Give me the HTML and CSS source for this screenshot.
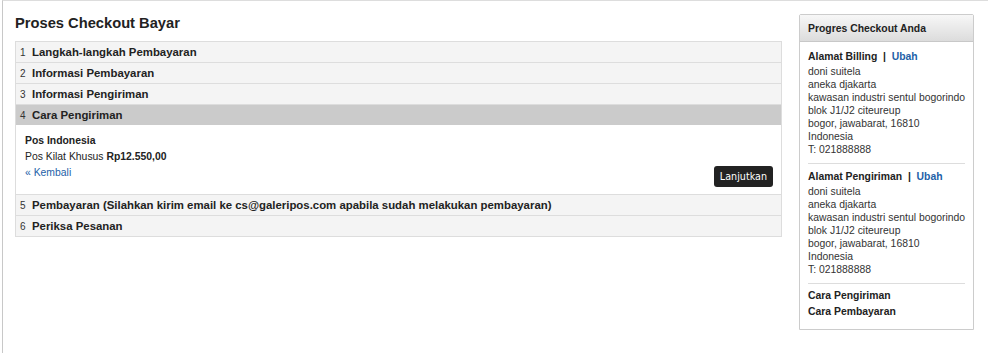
FILE: index.html
```html
<!DOCTYPE html>
<html lang="id">
<head>
    <meta charset="UTF-8">
    <meta name="viewport" content="width=device-width, initial-scale=1.0">
    <title>Proses Checkout Bayar</title>
    <link rel="stylesheet" href="styles.css">
</head>
<body>
    <div class="page">
        <div class="main">
            <h1>Proses Checkout Bayar</h1>
            <ol class="steps">
                <li class="step">
                    <div class="step-title"><span class="num">1</span>Langkah-langkah Pembayaran</div>
                </li>
                <li class="step">
                    <div class="step-title"><span class="num">2</span>Informasi Pembayaran</div>
                </li>
                <li class="step">
                    <div class="step-title"><span class="num">3</span>Informasi Pengiriman</div>
                </li>
                <li class="step active">
                    <div class="step-title"><span class="num">4</span>Cara Pengiriman</div>
                    <div class="step-body">
                        <div class="carrier">Pos Indonesia</div>
                        <div>Pos Kilat Khusus <b>Rp12.550,00</b></div>
                        <div class="step-actions">
                            <a href="#" class="back">« Kembali</a>
                            <button class="btn-next">Lanjutkan</button>
                        </div>
                    </div>
                </li>
                <li class="step">
                    <div class="step-title"><span class="num">5</span>Pembayaran (Silahkan kirim email ke cs@galeripos.com apabila sudah melakukan pembayaran)</div>
                </li>
                <li class="step">
                    <div class="step-title"><span class="num">6</span>Periksa Pesanan</div>
                </li>
            </ol>
        </div>

        <div class="sidebar">
            <div class="sidebar-head">Progres Checkout Anda</div>
            <div class="sidebar-body">
                <div class="block">
                    <div class="block-title">Alamat Billing &nbsp;|&nbsp; <a href="#">Ubah</a></div>
                    <address>
                        doni suitela<br>
                        aneka djakarta<br>
                        kawasan industri sentul bogorindo<br>
                        blok J1/J2 citeureup<br>
                        bogor, jawabarat, 16810<br>
                        Indonesia<br>
                        T: 021888888
                    </address>
                </div>
                <div class="block">
                    <div class="block-title">Alamat Pengiriman &nbsp;|&nbsp; <a href="#">Ubah</a></div>
                    <address>
                        doni suitela<br>
                        aneka djakarta<br>
                        kawasan industri sentul bogorindo<br>
                        blok J1/J2 citeureup<br>
                        bogor, jawabarat, 16810<br>
                        Indonesia<br>
                        T: 021888888
                    </address>
                </div>
                <div class="block last">
                    <div class="block-title">Cara Pengiriman</div>
                    <div class="block-title">Cara Pembayaran</div>
                </div>
            </div>
        </div>
    </div>
</body>
</html>
```

FILE: styles.css
```css
body {
    margin: 0;
    font-family: "Liberation Sans", Arial, sans-serif;
    font-size: 10.4px;
    color: #333;
    background-color: #fff;
}

a {
    color: #1e5fa8;
    text-decoration: none;
}

.page {
    display: flex;
    align-items: flex-start;
    gap: 17px;
    margin-left: 2px;
    height: 353px;
    box-sizing: border-box;
    border-top: 1px solid #ddd;
    border-left: 1px solid #c8c8c8;
    padding: 0 14px 0 12px;
}

.main {
    flex: 1;
}

h1 {
    margin: 0;
    padding: 12px 0 0;
    height: 28px;
    font-size: 14.7px;
    line-height: 20px;
    color: #222;
}

.steps {
    list-style: none;
    margin: 0;
    padding: 0;
    border: 1px solid #ddd;
    border-top: none;
}

.step-title {
    height: 20px;
    line-height: 20px;
    border-top: 1px solid #ddd;
    background-color: #f4f4f4;
    padding-left: 4px;
    font-size: 11.4px;
    font-weight: bold;
    color: #222;
}

.active .step-title {
    background-color: #cbcbcb;
}

.num {
    display: inline-block;
    width: 12px;
    font-size: 10px;
    font-weight: normal;
    color: #333;
}

.step-body {
    background-color: #fff;
    padding: 8px 8px 7px 9px;
    line-height: 16px;
    color: #222;
}

.carrier {
    font-weight: bold;
}

.step-actions {
    display: flex;
    justify-content: space-between;
    align-items: flex-start;
}

.btn-next {
    margin-top: 1px;
    height: 21px;
    padding: 0 6px;
    background-color: #222;
    color: #fff;
    border: none;
    border-radius: 3px;
    font-family: "DejaVu Sans", Verdana, sans-serif;
    font-size: 9.6px;
    cursor: pointer;
}

.sidebar {
    width: 175px;
    margin-top: 13px;
    border: 1px solid #ccc;
    border-radius: 2px 2px 0 0;
    box-sizing: border-box;
}

.sidebar-head {
    height: 24px;
    padding-top: 2px;
    line-height: 24px;
    padding-left: 8px;
    border-bottom: 1px solid #c8c8c8;
    background: linear-gradient(#f7f7f7, #dcdcdc);
    font-weight: bold;
    color: #222;
}

.sidebar-body {
    padding: 0 8px;
}

.block {
    padding: 7px 0 7px;
    border-bottom: 1px solid #ddd;
}

.block + .block {
    padding-top: 5px;
}

.block.last {
    border-bottom: none;
    padding: 4px 0 9px;
}

.block-title {
    font-weight: bold;
    line-height: 16px;
    color: #222;
}

address {
    font-style: normal;
    line-height: 13px;
    white-space: nowrap;
}
```
